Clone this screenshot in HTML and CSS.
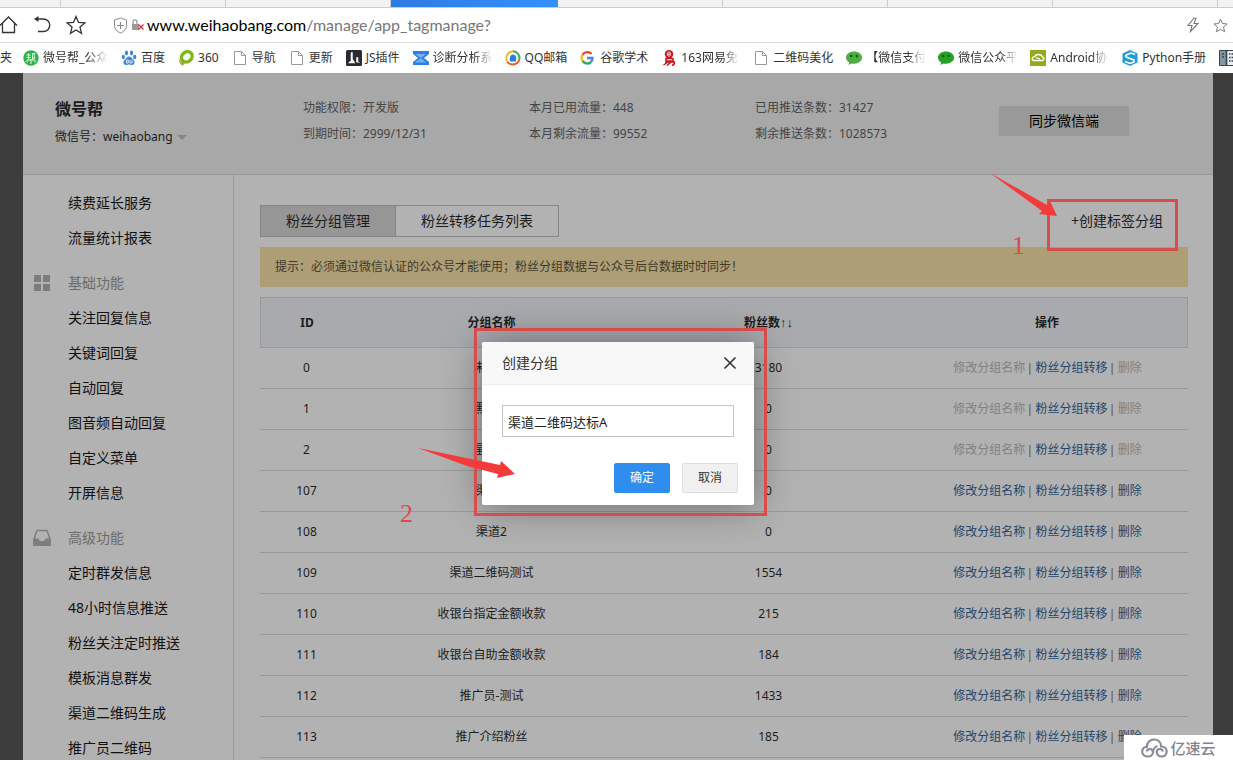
FILE: index.html
```html
<!DOCTYPE html>
<html lang="zh-CN">
<head>
<meta charset="utf-8">
<title>粉丝分组管理</title>
<link rel="stylesheet" href="styles.css">
</head>
<body>
<svg class="defs" aria-hidden="true">
  <symbol id="i-page" viewBox="0 0 16 16"><path d="M2.500 1.500h7l4 4v9h-11zM9.500 1.500v4h4" fill="#fff" stroke="#999"/></symbol>
  <symbol id="i-star" viewBox="0 0 20 20"><path d="M10 1.500l2.500 5.900 6.300.5-4.800 4.200 1.500 6.300-5.500-3.400-5.500 3.400L6 12.100 1.200 7.900l6.300-.5z" fill="none" stroke="currentColor" stroke-width="1.300"/></symbol>
  <symbol id="i-chat" viewBox="0 0 16 16"><path d="M8 1.500c4.600 0 8 2.600 8 6.100s-3.400 6.100-8 6.100c-.9 0-1.700-.1-2.500-.3L2.600 15l.6-2.500C1.200 11.400 0 9.700 0 7.600 0 4.100 3.400 1.500 8 1.500z" fill="currentColor"/><circle cx="5.200" cy="6" r="1.200" fill="#174d12"/><circle cx="10.800" cy="6" r="1.200" fill="#174d12"/></symbol>
</svg>

<div class="tabstrip">
  <span class="tab tab-first"></span><span class="tab"></span><span class="tab"></span><span class="tab tab-active"></span><span class="tab"></span><span class="tab"></span><span class="tab"></span><span class="tab"></span>
</div>

<div class="address">
  <button class="tool" aria-label="主页"><svg width="20" height="20" viewBox="0 0 20 20"><path d="M0 10.500L8.500 2l8.500 8.500M2.500 8.500v9h12v-9" fill="none" stroke="#333" stroke-width="1.300"/></svg></button>
  <button class="tool" aria-label="后退"><svg width="20" height="20" viewBox="0 0 20 20"><path d="M3 4h7.500a6 6 0 0 1 0 12.500H5" fill="none" stroke="#333" stroke-width="1.400"/><path d="M5.500 1L1 4l4.500 3z" fill="#333"/></svg></button>
  <button class="tool" aria-label="收藏"><svg width="20" height="20"><use href="#i-star"/></svg></button>
  <div class="url">
    <svg width="15" height="17" viewBox="0 0 15 17"><path d="M7.500 1l6 2v5.500c0 3.500-2.500 6-6 7.500-3.500-1.500-6-4-6-7.500V3zM7.500 5v7M4 8.500h7" fill="none" stroke="#888"/></svg>
    <svg width="13" height="14" viewBox="0 0 13 14"><path d="M2 6V3.800a2 2 0 0 1 4 0V6" fill="none" stroke="#999" stroke-width="1.300"/><path d="M1 6h7v6H1z" fill="#999"/><path d="M7.500 6.500l5 5M12.500 6.500l-5 5" stroke="#e0243c" stroke-width="1.200"/></svg>
    <span class="url-text"><b>www.weihaobang.com</b>/manage/app_tagmanage?</span>
  </div>
  <button class="tool tool-small" aria-label="加速"><svg width="14" height="16" viewBox="0 0 14 16"><path d="M8 1L2 8.500h4L4.500 14.500 12 6.500H8l2-5z" fill="none" stroke="#777" stroke-width="1.100"/></svg></button>
  <button class="tool tool-small" aria-label="收藏网址"><svg width="15" height="15"><use href="#i-star"/></svg></button>
</div>

<nav class="bookmarks">
  <a href="#" class="mark mark-first">夹</a>
  <a href="#" class="mark mark-wider"><svg viewBox="0 0 16 16"><circle cx="8" cy="8" r="7.700" fill="#2eb24c"/><path d="M3.500 5h4.200M3.500 7.500h4.200M5.600 3v6.500M9.500 9.500v-6H12l-1.200 2.500L12 8.200H9.500M4 12.500v-2.500h8v2.500M8 9v5" fill="none" stroke="#d9ffd9"/></svg><span>微号帮_公众</span></a>
  <a href="#" class="mark"><svg viewBox="0 0 16 16" fill="#3b87dc"><ellipse cx="5.500" cy="3" rx="1.600" ry="2.400"/><ellipse cx="10.500" cy="3" rx="1.600" ry="2.400"/><ellipse cx="2.300" cy="7" rx="1.600" ry="2.200"/><ellipse cx="13.700" cy="7" rx="1.600" ry="2.200"/><path d="M8 6.500c2 0 3 2.200 4.500 3.500 1.800 1.700 1.200 5-1.500 5-1.200 0-2-.5-3-.5s-1.800.5-3 .5c-2.700 0-3.300-3.300-1.500-5C5 8.700 6 6.500 8 6.500z"/><path d="M5.500 10v3h1.800v-3zM9 10v3h2v-3" fill="none" stroke="#fff" stroke-width=".8"/></svg><span>百度</span></a>
  <a href="#" class="mark"><svg viewBox="0 0 16 16"><ellipse cx="8.800" cy="6.800" rx="5.600" ry="4.800" transform="rotate(-40 8.800 6.800)" fill="none" stroke="#7fb51d" stroke-width="3.400"/><path d="M1 7c0 4 3 6 6.500 5.500L4.500 15.800C2 14 .3 10.500 1 7z" fill="#a5ad1c"/></svg><span>360</span></a>
  <a href="#" class="mark"><svg><use href="#i-page"/></svg><span>导航</span></a>
  <a href="#" class="mark"><svg><use href="#i-page"/></svg><span>更新</span></a>
  <a href="#" class="mark"><svg viewBox="0 0 16 16"><rect width="16" height="16" rx="1.500" fill="#2b2b33"/><path d="M5 2.500v8L2.500 13H9L6.500 9V2.500zM10.500 7.500h1.500V12h-1.500zM11 12.500h3" fill="#fff" stroke="#fff" stroke-width=".5"/></svg><span>JS插件</span></a>
  <a href="#" class="mark mark-wide"><svg viewBox="0 0 16 16"><path d="M0 1h16v3l-5 4 5 4v3H0v-3l5-4-5-4z" fill="#2f80dc"/><path d="M2 4h11L8 8zM2 12.500L8 8l5 4.500" fill="#71b0f2"/></svg><span>诊断分析系</span></a>
  <a href="#" class="mark"><svg viewBox="0 0 16 16" fill="none" stroke-width="2"><path d="M2 11A7 7 0 0 1 8 1.200" stroke="#e7bd28"/><path d="M8 1.200A7 7 0 0 1 14.500 9" stroke="#3cab58"/><path d="M14.500 9A7 7 0 0 1 2 11.500" stroke="#e65f31"/><path d="M5 11.500c-1-4 .5-7 3-7s4 3 3 7z" fill="#2380d2"/></svg><span>QQ邮箱</span></a>
  <a href="#" class="mark"><svg viewBox="0 0 16 16" fill="none" stroke-width="2.400"><path d="M2.600 4.800A5.500 5.500 0 0 1 11.500 4" stroke="#ea4335"/><path d="M2.600 4.800a5.500 5.500 0 0 0 0 6" stroke="#fbbc05"/><path d="M2.600 10.800a5.500 5.500 0 0 0 8.200 1.400" stroke="#34a853"/><path d="M10.800 12.200A5.500 5.500 0 0 0 12.500 8H7" stroke="#4285f4"/></svg><span>谷歌学术</span></a>
  <a href="#" class="mark mark-wide"><svg viewBox="0 0 16 16"><circle cx="8" cy="4.200" r="4.200" fill="#c8141c"/><path d="M6.300 4.200h3.400c0-2.800-3.400-2.800-3.400 0s2.600 2 3.400 1" fill="none" stroke="#fff"/><path d="M5 8.500h7v2.500H5zM4 12h9.500c0 2-.5 3.200-2.500 3.200M7 12l-4.500 3M10 12l-4 3.500" fill="none" stroke="#c8141c" stroke-width="1.500"/></svg><span>163网易免</span></a>
  <a href="#" class="mark"><svg><use href="#i-page"/></svg><span>二维码美化</span></a>
  <a href="#" class="mark mark-wide"><svg class="light-green"><use href="#i-chat"/></svg><span>【微信支付</span></a>
  <a href="#" class="mark mark-wide"><svg class="green"><use href="#i-chat"/></svg><span>微信公众平</span></a>
  <a href="#" class="mark mark-wide"><svg viewBox="0 0 16 16"><path d="M0 0h16v16H0z" fill="#93aa1c"/><path d="M3.500 10.500h9a1.800 1.800 0 0 0 0-3.500c-.6-1.500-2-2.500-4-2.500S5 5.500 4.500 7a1.800 1.800 0 0 0-1 3.500zM6 7.500l4 1.500" fill="none" stroke="#fff" stroke-width="1.300"/></svg><span>Android协</span></a>
  <a href="#" class="mark"><svg viewBox="0 0 16 16"><path d="M8 0l7.500 3.500v9L8 16 .5 12.500v-9z" fill="#239bd8"/><path d="M13 4.500L9 3 4 5v2l8 3v2l-4 1.500L3 11.500" fill="none" stroke="#fff" stroke-width="1.600"/></svg><span>Python手册</span></a>
  <a href="#" class="mark" aria-label="更多"><svg viewBox="0 0 16 16"><path d="M.5.500h15v15H.5z" fill="#e8edf0" stroke="#33424d"/><path d="M1 1h6v14H1z" fill="#8296a3"/><path d="M7.500 1v14M3 4h2M3 7h2M10 4h1.500M12.500 4H14M10 7.500h1.500M12.500 7.500H14M10 11h1.500M12.500 11H14" stroke="#33424d" stroke-width="1.600"/></svg></a>
</nav>

<div class="viewport">
  <div class="site">
    <header class="account">
      <div class="brand">
        <h1>微号帮</h1>
        <p>微信号：weihaobang <i class="caret"></i></p>
      </div>
      <div class="quota">
        <span>功能权限：开发版</span><span>本月已用流量：448</span><span>已用推送条数：31427</span>
        <span>到期时间：2999/12/31</span><span>本月剩余流量：99552</span><span>剩余推送条数：1028573</span>
      </div>
      <button class="sync">同步微信端</button>
    </header>

    <div class="body">
      <nav class="side">
        <a href="#">续费延长服务</a>
        <a href="#">流量统计报表</a>
        <h2><svg width="18" height="18" viewBox="0 0 18 18" fill="#7d7d7d"><path d="M1 1h7v7H1zM10 1h7v7h-7zM1 10h7v7H1zM10 10h7v7h-7z"/></svg>基础功能</h2>
        <a href="#">关注回复信息</a>
        <a href="#">关键词回复</a>
        <a href="#">自动回复</a>
        <a href="#">图音频自动回复</a>
        <a href="#">自定义菜单</a>
        <a href="#">开屏信息</a>
        <h2><svg width="18" height="18" viewBox="0 0 18 18"><path d="M1 10L4 1.500h10l3 8.500v6H1z" fill="none" stroke="#7d7d7d" stroke-width="1.500"/><path d="M.3 9.500h5c.6 2 1.900 2.700 3.700 2.700s3.100-.7 3.700-2.700h5V17H.3z" fill="#7d7d7d"/></svg>高级功能</h2>
        <a href="#">定时群发信息</a>
        <a href="#">48小时信息推送</a>
        <a href="#">粉丝关注定时推送</a>
        <a href="#">模板消息群发</a>
        <a href="#">渠道二维码生成</a>
        <a href="#">推广员二维码</a>
      </nav>

      <main class="main">
        <div class="bar">
          <div class="switch"><a href="#" class="on">粉丝分组管理</a><a href="#">粉丝转移任务列表</a></div>
          <a href="#" class="create">+创建标签分组</a>
        </div>
        <p class="notice">提示：必须通过微信认证的公众号才能使用；粉丝分组数据与公众号后台数据时时同步！</p>
        <table class="groups">
          <thead><tr><th class="col-id">ID</th><th>分组名称</th><th>粉丝数<span class="sort">↑↓</span></th><th class="col-op">操作</th></tr></thead>
          <tbody>
            <tr><td>0</td><td>未分组</td><td>3180</td><td><a class="off">修改分组名称</a><i>|</i><a href="#">粉丝分组转移</a><i>|</i><a class="off">删除</a></td></tr>
            <tr><td>1</td><td>黑名单</td><td>0</td><td><a class="off">修改分组名称</a><i>|</i><a href="#">粉丝分组转移</a><i>|</i><a class="off">删除</a></td></tr>
            <tr><td>2</td><td>星标组</td><td>0</td><td><a class="off">修改分组名称</a><i>|</i><a href="#">粉丝分组转移</a><i>|</i><a class="off">删除</a></td></tr>
            <tr><td>107</td><td>渠道1</td><td>0</td><td><a href="#">修改分组名称</a><i>|</i><a href="#">粉丝分组转移</a><i>|</i><a href="#">删除</a></td></tr>
            <tr><td>108</td><td>渠道2</td><td>0</td><td><a href="#">修改分组名称</a><i>|</i><a href="#">粉丝分组转移</a><i>|</i><a href="#">删除</a></td></tr>
            <tr><td>109</td><td>渠道二维码测试</td><td>1554</td><td><a href="#">修改分组名称</a><i>|</i><a href="#">粉丝分组转移</a><i>|</i><a href="#">删除</a></td></tr>
            <tr><td>110</td><td>收银台指定金额收款</td><td>215</td><td><a href="#">修改分组名称</a><i>|</i><a href="#">粉丝分组转移</a><i>|</i><a href="#">删除</a></td></tr>
            <tr><td>111</td><td>收银台自助金额收款</td><td>184</td><td><a href="#">修改分组名称</a><i>|</i><a href="#">粉丝分组转移</a><i>|</i><a href="#">删除</a></td></tr>
            <tr><td>112</td><td>推广员-测试</td><td>1433</td><td><a href="#">修改分组名称</a><i>|</i><a href="#">粉丝分组转移</a><i>|</i><a href="#">删除</a></td></tr>
            <tr><td>113</td><td>推广介绍粉丝</td><td>185</td><td><a href="#">修改分组名称</a><i>|</i><a href="#">粉丝分组转移</a><i>|</i><a href="#">删除</a></td></tr>
          </tbody>
        </table>
      </main>
    </div>

    <form class="dialog" role="dialog" aria-label="创建分组">
      <div class="dialog-head"><label for="group-name">创建分组</label><button type="button" class="close" aria-label="关闭"><svg width="14" height="14" viewBox="0 0 14 14"><path d="M1.500 1.500l11 11M12.500 1.500l-11 11" stroke="#333" stroke-width="1.600"/></svg></button></div>
      <div class="dialog-body">
        <input id="group-name" type="text" value="渠道二维码达标A">
        <div class="actions"><button type="button" class="ok">确定</button><button type="button" class="cancel">取消</button></div>
      </div>
    </form>

    <svg class="step step-one" width="200" height="95" viewBox="985 165 200 95">
      <rect x="1048.500" y="200.500" width="128" height="49"/>
      <path d="M990 173L1047 205 1050 201 1057 216 1039 214 1042 211z"/>
      <text x="1012" y="254">1</text>
    </svg>
    <svg class="step step-two" width="375" height="210" viewBox="395 320 375 210">
      <rect x="475.500" y="329.500" width="290" height="185"/>
      <path d="M418 448L500 465 501 461 515 474 497 478 498 474 467 466z"/>
      <text x="400" y="522">2</text>
    </svg>
  </div>
  <div class="watermark"><svg width="27" height="20" viewBox="0 0 27 20" fill="none" stroke="#878c98" stroke-width="2.200"><path d="M7 18.500C3.500 18.500 1.200 16.500 1.200 13.500S3.500 9 5.800 9C5.800 4.500 9 1.500 13 1.500c4.500 0 7 3 7.200 7 3.300 0 5.500 2 5.500 5s-2.200 5-5.200 5c-2.800 0-4.800-2-4.800-4.200 0-2 1.500-3.300 3.200-3.300s2.800 1.200 2.800 2.600M7 18.500c3 0 5-2 5-4.200 0-2-1.500-3.300-3.200-3.300S6 12.200 6 13.600M12 14.300c0-2.300 1.800-5.300 4.500-6.300"/></svg>亿速云</div>
</div>
</body>
</html>
```
FILE: styles.css
```css
* { box-sizing: border-box; }
body {
  margin: 0;
  height: 100vh;
  display: flex;
  flex-direction: column;
  overflow: hidden;
  background: #fff;
  color: #1c1c1c;
  font: 12px/20px "Noto Sans", "Noto Sans CJK SC", sans-serif;
}
h1, h2, p { margin: 0; font-weight: 400; }
a { color: inherit; text-decoration: none; }
button { padding: 0; border: 0; background: none; color: inherit; font: inherit; cursor: pointer; }
.defs { display: none; }

.tabstrip { flex: none; display: flex; height: 8px; background: #f2f2f2; border-bottom: 1px solid #ccc; overflow: hidden; }
.tab { flex: 0 0 165px; border-right: 1px solid #ccc; }
.tab-first { flex-basis: 61px; }
.tab-active { flex-basis: 167px; height: 8px; border: 0; background: linear-gradient(90deg, #2f7be4, #3490fa); }

.address { flex: none; display: flex; align-items: center; height: 35px; padding-right: 5px; border-bottom: 1px solid #ddd; }
.tool { flex: none; width: 20px; height: 20px; margin-right: 13px; color: #333; }
.tool svg, .close svg { display: block; }
.tool-small { width: 15px; margin: 0 0 0 12px; height: 16px; color: #777; }
.url { flex: 1; display: flex; align-items: center; gap: 3px; margin-left: 14px; min-width: 0; }
.url-text { font-family: Lato, "Noto Sans", sans-serif; font-size: 16px; color: #777; white-space: nowrap; }
.url-text b { font-weight: 400; color: #000; }

.bookmarks { flex: none; display: flex; height: 30px; overflow: hidden; color: #333; }
.mark { flex: none; display: flex; align-items: center; gap: 4px; padding-right: 13px; white-space: nowrap; }
.mark svg { flex: none; width: 16px; height: 16px; }
.mark-first { padding-right: 11px; }
.mark-wide { width: 92px; }
.mark-wider { width: 98px; }
.mark-wide span, .mark-wider span { flex: 1; mask-image: linear-gradient(90deg, #000 70%, transparent); }
.light-green { color: #4cae42; }
.green { color: #22a122; }

.viewport { flex: 1; min-height: 0; position: relative; padding: 0 20px 0 23px; background: #3c3c3c; overflow: hidden; }
.site { position: relative; min-height: 100%; background: #b2b2b2; }

.account { display: flex; padding: 22px 84px 13px 32px; height: 102px; background: #a8a8a8; border-bottom: 1px solid #979797; }
.brand { width: 248px; }
.brand h1 { font-size: 16px; line-height: 28px; font-weight: 700; }
.brand p { line-height: 28px; }
.caret { display: inline-block; margin: 0 0 1px 1px; border: 5px solid transparent; border-top-color: #858585; border-bottom: 0; }
.quota { flex: 1; display: grid; grid-template-columns: repeat(3, 226px); grid-auto-rows: 26px; line-height: 26px; color: #444; white-space: nowrap; }
.sync { flex: none; width: 130px; height: 30px; margin-top: 11px; background: #999; color: #000; font-size: 14px; }

.body { display: flex; }
.side { flex: none; width: 211px; padding-top: 10px; border-right: 1px solid #9c9c9c; font-size: 14px; line-height: 35px; }
.side a { display: block; padding-left: 45px; color: #111; }
.side h2 { display: flex; align-items: center; gap: 17px; margin-top: 10px; padding-left: 10px; font-size: 14px; color: #6b6b6b; }
.main { flex: 1; min-width: 0; padding: 30px 25px 0 26px; }

.bar { display: flex; justify-content: space-between; padding-right: 25px; font-size: 14px; }
.switch { display: flex; border: 1px solid #858585; }
.switch a { padding: 0 25px; line-height: 30px; }
.switch .on { background: #969696; border-right: 1px solid #858585; }
.create { line-height: 32px; }
.notice { margin: 10px 0; padding: 0 15px; line-height: 40px; background: #ae9e75; color: #40392a; }

.groups { width: 100%; table-layout: fixed; border-collapse: separate; border-spacing: 0; text-align: center; }
.groups th { height: 51px; padding: 0; background: #a9aaae; border: solid #97989c; border-width: 1px 0; }
.groups th:first-child { border-left-width: 1px; }
.groups th:last-child { border-right-width: 1px; }
.groups td { height: 41px; padding: 0; border-bottom: 1px solid #999; }
.groups .col-id { width: 93px; }
.groups .col-op { width: 281px; }
.sort { font-weight: 400; font-size: 13px; font-family: "Liberation Serif", serif; }
.groups td a { color: #24466a; }
.groups td .off { color: #818181; }
.groups td i { margin: 0 4px 0 3px; font: 12px "Liberation Sans", sans-serif; color: #635850; }

.dialog { position: absolute; top: 269px; left: 0; right: 0; width: 272px; margin: 0 auto; background: #fff; border-radius: 2px; box-shadow: 1px 1px 40px rgba(0, 0, 0, .4); }
.dialog-head { display: flex; justify-content: space-between; align-items: center; height: 43px; padding: 0 17px 0 20px; background: #f8f8f8; border-bottom: 1px solid #eee; border-radius: 2px 2px 0 0; font-size: 14px; color: #333; }
.dialog-body { padding: 20px 16px 12px 20px; }
.dialog input { display: block; width: 232px; height: 32px; padding: 0 5px; border: 1px solid #c4c4c4; color: #222; background: #fff; font: inherit; font-size: 13px; }
.actions { display: flex; justify-content: flex-end; gap: 12px; margin-top: 26px; }
.actions button { width: 56px; height: 30px; border: 1px solid #dedede; border-radius: 2px; background: #f1f1f1; color: #333; }
.actions .ok { border-color: #2e8ded; background: #2e8ded; color: #fff; }

.step { position: absolute; pointer-events: none; }
.step-one { top: 92px; right: 28px; }
.step-two { top: 247px; left: calc(50% - 223px); }
.step rect { fill: none; stroke: #d84c4c; stroke-width: 3; }
.step path { fill: #f43b3b; }
.step text { fill: #dc4a4c; font: 26px "Liberation Serif", serif; }

.watermark { position: absolute; right: 0; bottom: 0; display: flex; align-items: center; justify-content: center; gap: 2px; width: 109px; height: 25px; background: #fff; color: #7f8491; font-size: 15px; font-weight: 500; }
```
